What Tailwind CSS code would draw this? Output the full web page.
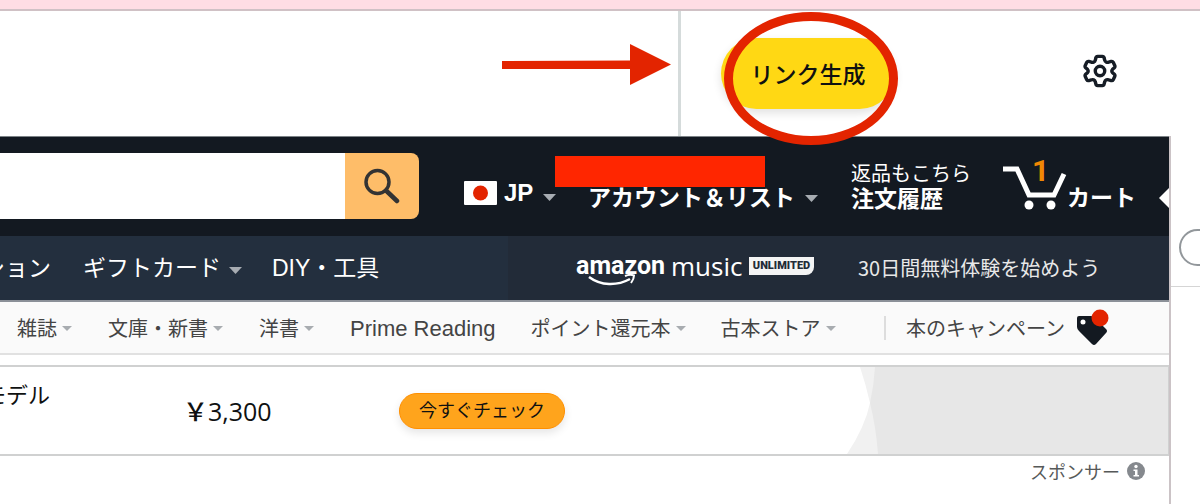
<!DOCTYPE html>
<html lang="ja">
<head>
    <meta charset="UTF-8">
    <meta name="viewport" content="width=device-width, initial-scale=1.0">
    <title>リンク生成</title>
    <script src="https://cdn.jsdelivr.net/npm/@tailwindcss/browser@4"></script>
</head>
<body class="flex h-screen flex-col overflow-hidden bg-white font-['Liberation_Sans','Noto_Sans_CJK_JP',sans-serif] text-[#0f1111] whitespace-nowrap">
    <div class="h-[11px] shrink-0 border-b-2 border-[#d0c1c5] bg-[#ffdde4]"></div>

    <!-- Toolbar -->
    <div class="flex h-[125px] shrink-0">
        <div class="flex flex-1 justify-end pt-8 pr-[7px]">
            <svg class="h-[44px] w-[170px]" viewBox="0 0 170 44" fill="#e32400">
                <path d="M1 18L129 17.500V1L170 21.500L129 42V26L1 26Z"/>
            </svg>
        </div>
        <div class="flex w-[522px] items-start border-l-[3px] border-[#d5dbdb] pt-[27px] pl-[40px]">
            <div class="relative">
                <button class="h-[71px] w-[174px] rounded-full bg-[#ffd814] font-['Noto_Sans_CJK_JP',sans-serif] text-[23px] font-medium shadow-[0_4px_10px_rgba(0,0,0,0.12)]">リンク生成</button>
                <div class="absolute -top-[26px] left-[3px] z-10 h-[133px] w-[174px] rounded-[50%] border-[9px] border-[#e32400]"></div>
            </div>
            <button class="mt-4 ml-[188px]" aria-label="設定">
                <svg class="size-[34px]" viewBox="0 0 36 36" fill="none" stroke="#161d26" stroke-width="3.600" stroke-linejoin="round" stroke-linecap="round">
                    <path d="M15.500 2.500h5Q22 2.500 22.300 4l.7 2.600Q23.300 8 24.700 8.600T27.200 8.600L29.800 7.900Q31.300 7.500 32 8.800L33.600 12.200Q34.200 13.500 33.200 14.500L31.300 16.200Q29.800 18 31.300 19.800L33.200 21.500Q34.200 22.500 33.600 23.800L32 27.200Q31.300 28.500 29.800 28.100L27.200 27.400Q26.100 26.900 24.700 27.400T23 29.400L22.300 32Q22 33.500 20.500 33.500H15.500Q14 33.500 13.700 32L13 29.400Q12.700 28 11.300 27.400T8.800 27.400L6.200 28.100Q4.700 28.500 4 27.200L2.400 23.800Q1.800 22.500 2.800 21.500L4.700 19.800Q6.200 18 4.700 16.200L2.800 14.500Q1.800 13.500 2.400 12.200L4 8.800Q4.700 7.500 6.200 7.900L8.800 8.600Q9.900 9.100 11.300 8.600T13 6.600L13.700 4Q14 2.500 15.500 2.500Z"/>
                    <circle cx="18" cy="18" r="5"/>
                </svg>
            </button>
        </div>
    </div>

    <div class="flex min-h-0 flex-1">
        <main class="min-w-0 flex-1">
            <!-- Main header -->
            <header class="relative flex h-[100px] border-t border-[#7c8286] bg-[#131921] font-['Noto_Sans_CJK_JP',sans-serif] text-white">
                <form class="mt-4 flex h-[66px] w-[419px] overflow-hidden rounded-r-lg">
                    <input type="text" aria-label="検索" class="min-w-0 flex-1 bg-white px-3 text-black outline-none">
                    <button type="button" class="flex w-[74px] items-center justify-center bg-[#febd69]" aria-label="検索する">
                        <svg class="size-9" viewBox="0 0 36 36" fill="none" stroke="#333" stroke-width="3.500">
                            <circle cx="13.500" cy="14" r="11.500"/>
                            <path d="M22 22.500L33 33" stroke-width="4.500" stroke-linecap="round"/>
                        </svg>
                    </button>
                </form>
                <a href="#" class="mt-11 ml-[45px] flex h-6 items-center">
                    <svg class="h-6 w-[33px]" viewBox="0 0 33 24"><rect width="33" height="24" rx="1" fill="#fff"/><circle cx="16.500" cy="12" r="7.500" fill="#e32400"/></svg>
                    <span class="ml-[7px] w-[30px] font-['Liberation_Sans'] text-2xl leading-6 font-bold">JP</span>
                    <svg class="mt-2 ml-[9px] h-[7px] w-[13px]" viewBox="0 0 13 7"><path d="M0 0h13L6.500 7z" fill="#a7acb2"/></svg>
                </a>
                <a href="#" class="relative mt-[47px] ml-8 flex h-6 items-center">
                    <span class="text-[23px] leading-6 font-bold">アカウント＆リスト</span>
                    <svg class="mt-1 ml-[10px] h-[7px] w-[13px]" viewBox="0 0 13 7"><path d="M0 0h13L6.500 7z" fill="#a7acb2"/></svg>
                    <span class="absolute -top-7 -left-[33px] h-[31px] w-[210px] bg-[#ff2600]"></span>
                </a>
                <a href="#" class="mt-6 ml-[33px] flex flex-col">
                    <span class="text-xl leading-6">返品もこちら</span>
                    <span class="text-[23px] leading-6 font-bold">注文履歴</span>
                </a>
                <a href="#" class="relative mt-[26px] ml-8 flex h-12 items-end">
                    <svg class="h-[46px] w-16" viewBox="0 0 64 46">
                        <path d="M0 4H14L26 30H51L61 9" fill="none" stroke="#fff" stroke-width="5"/>
                        <circle cx="26" cy="40" r="4.500" fill="#fff"/><circle cx="48" cy="40" r="4.500" fill="#fff"/>
                    </svg>
                    <span class="absolute -top-[5px] left-[29px] font-['Roboto'] text-3xl leading-[26px] font-bold text-[#f08804]">1</span>
                    <span class="mb-[3px] text-[23px] leading-6 font-bold">カート</span>
                </a>
                <svg class="absolute top-[51px] right-0 h-5 w-[10px]" viewBox="0 0 10 20"><path d="M10 0L0 10L10 20z" fill="#fff"/></svg>
            </header>

            <!-- Category navigation -->
            <nav class="flex h-[66px] items-center border-b-2 border-[#8b9098] bg-[#232f3e] font-['Liberation_Sans','Noto_Sans_CJK_JP',sans-serif] text-[23px] leading-8 text-white">
                <a href="#" class="flex w-[51px] justify-end overflow-hidden">ファッション</a>
                <a href="#" class="ml-8 flex items-center">ギフトカード
                    <svg class="mt-1 ml-2 h-[7px] w-[13px]" viewBox="0 0 13 7"><path d="M0 0h13L6.500 7z" fill="#a7acb2"/></svg>
                </a>
                <a href="#" class="ml-[30px] flex w-[236px] items-center">DIY・工具</a>
                <a href="#" class="flex h-full flex-1 items-center bg-[#222b38] pl-[68px]">
                    <span class="relative flex w-[238px] items-center pb-1 font-['Roboto'] text-[25px]">
                        <span class="w-[89px] font-bold">amazon</span>
                        <span class="ml-[6px] w-[72px] font-['Open_Sans'] text-[26px]">music</span>
                        <svg class="absolute top-6 left-3 h-3 w-[48px]" viewBox="0 0 48 12" fill="none" stroke="#fff">
                            <path d="M1 3C13 12 29 12 42 5" stroke-width="2.500"/>
                            <path d="M37 2Q42 0 46 1.500Q46 5 43 9" stroke-width="2"/>
                        </svg>
                        <span class="ml-[6px] flex h-[18px] w-[65px] items-center justify-center rounded-br-lg bg-[#f4f4f4] text-[11px] leading-4 font-black text-[#222b38]">UNLIMITED</span>
                    </span>
                    <span class="ml-11 font-['Noto_Sans_CJK_JP'] text-xl text-[#e8e8e8]">30日間無料体験を始めよう</span>
                </a>
            </nav>

            <!-- Books navigation -->
            <nav class="flex h-[53px] items-center border-b-2 border-[#e1e1e1] bg-[#fafafa] pt-px pl-[17px] font-['Noto_Sans_CJK_JP',sans-serif] text-xl leading-8 text-[#444]">
                <a href="#" class="flex items-center gap-[5px]">雑誌
                    <svg class="h-[5px] w-[10px]" viewBox="0 0 10 5"><path d="M0 0h10L5 5z" fill="#a8acb0"/></svg>
                </a>
                <a href="#" class="ml-9 flex items-center gap-[5px]">文庫・新書
                    <svg class="h-[5px] w-[10px]" viewBox="0 0 10 5"><path d="M0 0h10L5 5z" fill="#a8acb0"/></svg>
                </a>
                <a href="#" class="ml-9 flex items-center gap-[5px]">洋書
                    <svg class="h-[5px] w-[10px]" viewBox="0 0 10 5"><path d="M0 0h10L5 5z" fill="#a8acb0"/></svg>
                </a>
                <a href="#" class="ml-9 pt-px font-['Liberation_Sans'] text-[22px]">Prime Reading</a>
                <a href="#" class="ml-[35px] flex items-center gap-[5px]">ポイント還元本
                    <svg class="h-[5px] w-[10px]" viewBox="0 0 10 5"><path d="M0 0h10L5 5z" fill="#a8acb0"/></svg>
                </a>
                <a href="#" class="ml-[35px] flex items-center gap-[5px]">古本ストア
                    <svg class="h-[5px] w-[10px]" viewBox="0 0 10 5"><path d="M0 0h10L5 5z" fill="#a8acb0"/></svg>
                </a>
                <a href="#" class="ml-auto flex items-center border-l-2 border-[#ddd] pl-5 leading-6">本のキャンペーン</a>
                <svg class="mr-[59px] ml-[11px] h-[38px] w-[34px]" viewBox="0 0 34 38">
                    <path d="M3 7H15Q17 7 19 9L30 20Q32 22 30 24L20 35Q18 37 16 35L3 22Q1 20 1 18V9Q1 7 3 7Z" fill="#131921"/>
                    <circle cx="7" cy="13" r="2.500" fill="#fff"/>
                    <circle cx="24" cy="9" r="8.500" fill="#e32400"/>
                </svg>
            </nav>

            <!-- Sponsored banner -->
            <section class="relative mt-[10px] flex h-[91px] border-y-2 border-r border-[#d0d1d1]">
                <a href="#" class="mt-[10px] flex h-8 w-[50px] items-center justify-end overflow-hidden font-['Noto_Sans_CJK_JP'] text-[22px] leading-8">新モデル</a>
                <span class="ml-[133px] flex w-[216px] items-center self-center font-['Open_Sans','Noto_Sans_CJK_JP'] text-[25px] leading-8 font-medium">￥3,300</span>
                <button class="h-9 w-[166px] self-center rounded-full border border-[#ff8f00] bg-[#ffa41c] pb-[3px] font-['Noto_Sans_CJK_JP'] text-lg leading-6 shadow-[0_4px_8px_rgba(0,0,0,0.1)]">今すぐチェック</button>
                <svg class="ml-auto h-full w-[349px]" viewBox="0 0 349 87" preserveAspectRatio="none">
                    <path d="M41 0Q47 18 51 36Q46 60 28 87H349V0Z" fill="#f1f1f1"/>
                    <path d="M56 0Q55 18 51 36Q57 60 59 87H349V0Z" fill="#e7e7e7"/>
                </svg>
            </section>
            <div class="flex items-center justify-end gap-[7px] pt-px pr-6 font-['Noto_Sans_CJK_JP'] text-lg text-[#565959]">
                スポンサー
                <svg class="size-[18px]" viewBox="0 0 18 18"><circle cx="9" cy="9" r="9" fill="#85898e"/><circle cx="9" cy="4.500" r="1.700" fill="#fff"/><path d="M6.500 7.500H10.500V13H12V14.500H6.500V13H8V9H6.500Z" fill="#fff"/></svg>
            </div>
        </main>

        <!-- Side panel -->
        <aside class="w-[31px] shrink-0 overflow-hidden border-l-2 border-[#cbc3c6]">
            <div class="h-[151px] border-b border-[#d5d5d5] pt-[93px] pl-2">
                <button class="h-[37px] w-[120px] rounded-full border-2 border-[#92979b] bg-white" aria-label="メニュー"></button>
            </div>
        </aside>
    </div>
</body>
</html>
